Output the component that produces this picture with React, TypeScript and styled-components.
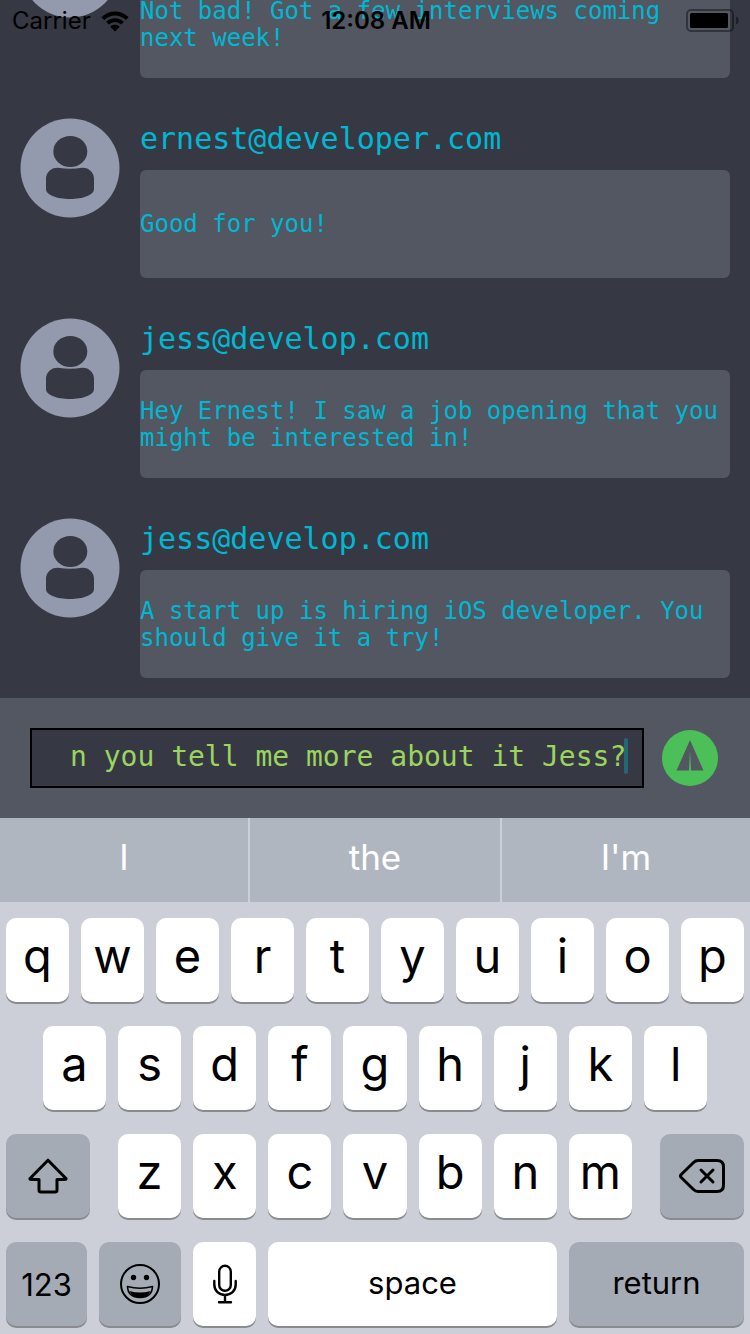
import React from "react";
import styled, { createGlobalStyle } from "styled-components";

const GlobalStyle = createGlobalStyle`
  * { box-sizing: border-box; }
  html, body { margin: 0; padding: 0; background: #363843; }
  button, input { font: inherit; color: inherit; border: 0; padding: 0; margin: 0; outline: 0; background: none; }
`;

const mono = `"DejaVu Sans Mono", "Liberation Mono", monospace`;
const sans = `Inter, "Liberation Sans", sans-serif`;

const Screen = styled.div`
  position: relative;
  display: flex;
  flex-direction: column;
  height: 100vh;
  overflow: hidden;
  background: #363843;
  font-family: ${sans};
`;

const StatusBar = styled.header`
  position: absolute;
  top: 0;
  left: 0;
  right: 0;
  z-index: 1;
  display: grid;
  grid-template-columns: 1fr auto 1fr;
  align-items: center;
  height: 42px;
  padding: 0 10px 0 12px;
  color: #000;
  font-size: 24px;
  line-height: 42px;
`;

const Carrier = styled.div`
  display: flex;
  align-items: center;
  gap: 10px;
`;

const Clock = styled.time`
  font-weight: 600;
`;

const Battery = styled.svg`
  justify-self: end;
`;

const Messages = styled.main`
  flex: 1;
  min-height: 0;
  display: flex;
  flex-direction: column;
  justify-content: flex-end;
  overflow: hidden;
  color: #00b8d1;
  font-family: ${mono};
`;

const MessageRow = styled.article`
  flex: none;
  display: flex;
  gap: 20px;
  height: 200px;
  padding: 20px;
`;

const MessageBody = styled.div`
  flex: 1;
  min-width: 0;
  display: flex;
  flex-direction: column;
`;

const Sender = styled.h2`
  margin: 0;
  height: 52px;
  font-size: 30px;
  font-weight: 400;
  line-height: 42px;
`;

const Bubble = styled.p`
  flex: 1;
  display: flex;
  align-items: center;
  margin: 0;
  padding-top: 1px;
  border-radius: 6px;
  background: #535762;
  font-size: 24px;
  line-height: 27px;
`;

const Composer = styled.form`
  flex: none;
  display: flex;
  align-items: center;
  gap: 18px;
  height: 120px;
  padding: 0 32px 0 30px;
  background: #535762;
`;

const Field = styled.div`
  position: relative;
  flex: 1;
  display: flex;
  height: 60px;
  padding-left: 38px;
  border: 2px solid #000;
  background: #363843;
`;

const MessageInput = styled.input`
  flex: 1;
  min-width: 0;
  padding-bottom: 4px;
  color: #9bd45f;
  font-family: ${mono};
  font-size: 28px;
`;

const Caret = styled.span`
  position: absolute;
  top: 8px;
  right: 14px;
  width: 4px;
  height: 36px;
  border-radius: 2px;
  background: #236877;
`;

const SendButton = styled.button`
  display: flex;
  width: 56px;
  height: 56px;
  border-radius: 50%;
`;

const Keyboard = styled.section`
  flex: none;
  background: #cccfd7;
  color: #000;
`;

const Suggestions = styled.div`
  display: grid;
  grid-template-columns: 248fr 250fr 248fr;
  gap: 2px;
  height: 84px;
`;

const Suggestion = styled.button`
  padding-bottom: 7px;
  background: #b0b6c0;
  color: #fff;
  font-size: 35px;
`;

const Keys = styled.div`
  display: flex;
  flex-direction: column;
  gap: 24px;
  padding: 16px 6px 8px;
`;

const KeyRow = styled.div<{ $inset?: boolean }>`
  display: flex;
  gap: 12px;
  padding: 0 ${(p) => (p.$inset ? "5%" : "0")};
`;

const LetterGroup = styled.div`
  flex: 514 1 0;
  display: flex;
  gap: 12px;
  margin: 0 16px;
`;

const Key = styled.button<{ $grow?: number; $dark?: boolean }>`
  flex: ${(p) => p.$grow ?? 63} 1 0;
  min-width: 0;
  display: flex;
  align-items: center;
  justify-content: center;
  height: 84px;
  border-radius: 10px;
  background: ${(p) => (p.$dark ? "#a4abb5" : "#fff")};
  box-shadow: 0 2px 0 #898b8f;
  font-size: 31px;
`;

const LetterKey = styled(Key)`
  padding-bottom: 10px;
  font-size: 47px;
`;

const WordKey = styled(Key)`
  padding-bottom: 4px;
`;

const Avatar = () => (
  <svg width="100" height="100" viewBox="0 0 100 100" aria-hidden="true">
    <circle cx="50" cy="50" r="49.5" fill="#949aad" />
    <ellipse cx="50.3" cy="33.5" rx="17" ry="15.6" fill="#363843" />
    <path
      d="M38 49.8C46 51 54 51 62 49.8C69 49.5 74 54.500 74 61V71C74 77 63 81 50 81C37 81 26 77 26 71V61C26 54.500 31 49.500 38 49.800Z"
      fill="#363843"
    />
  </svg>
);

const messages = [
  { from: "jess@develop.com", text: "Not bad! Got a few interviews coming next week!" },
  { from: "ernest@developer.com", text: "Good for you!" },
  { from: "jess@develop.com", text: "Hey Ernest! I saw a job opening that you might be interested in!" },
  { from: "jess@develop.com", text: "A start up is hiring iOS developer. You should give it a try!" },
];

const letters = (row: string) =>
  row.split("").map((c) => (
    <LetterKey type="button" key={c}>
      {c}
    </LetterKey>
  ));

export default function App() {
  return (
    <Screen>
      <GlobalStyle />
      <StatusBar>
        <Carrier>
          <span>Carrier</span>
          <svg width="28" height="21" viewBox="0 0 28 21" aria-label="Wi-Fi">
            <path d="M1.800 7.600C8.700 .700 19.300 .700 26.200 7.600" fill="none" stroke="#000" strokeWidth="4" />
            <path d="M6.500 12.200C10.700 8 17.300 8 21.500 12.200" fill="none" stroke="#000" strokeWidth="3.800" />
            <path d="M14 20.500L9.200 15.800C11.900 13.200 16.100 13.200 18.800 15.800Z" />
          </svg>
        </Carrier>
        <Clock>12:08 AM</Clock>
        <Battery width="54" height="24" viewBox="0 0 54 24" aria-label="Battery full">
          <rect x="1" y="1" width="46" height="21" rx="4" fill="none" stroke="#000" strokeOpacity=".4" strokeWidth="2" />
          <rect x="4" y="4" width="38" height="15" rx="1.500" />
          <path d="M50 7.500C53.700 8.500 53.700 14.500 50 15.500Z" fillOpacity=".4" />
        </Battery>
      </StatusBar>

      <Messages>
        {messages.map((m) => (
          <MessageRow key={m.text}>
            <Avatar />
            <MessageBody>
              <Sender>{m.from}</Sender>
              <Bubble>{m.text}</Bubble>
            </MessageBody>
          </MessageRow>
        ))}
      </Messages>

      <Composer onSubmit={(e) => e.preventDefault()}>
        <Field>
          <MessageInput aria-label="Message" defaultValue="n you tell me more about it Jess?" />
          <Caret />
        </Field>
        <SendButton aria-label="Send">
          <svg width="56" height="56" viewBox="0 0 56 56">
            <circle cx="28" cy="28" r="28" fill="#4bc058" />
            <path d="M28 10L41.500 40.500H29L28 21L27 40.500H14.500Z" fill="#535762" />
          </svg>
        </SendButton>
      </Composer>

      <Keyboard aria-label="Keyboard">
        <Suggestions>
          <Suggestion type="button">I</Suggestion>
          <Suggestion type="button">the</Suggestion>
          <Suggestion type="button">I'm</Suggestion>
        </Suggestions>
        <Keys>
          <KeyRow>{letters("qwertyuiop")}</KeyRow>
          <KeyRow $inset>{letters("asdfghjkl")}</KeyRow>
          <KeyRow>
            <Key type="button" $dark $grow={84} aria-label="Shift">
              <svg width="40" height="36" viewBox="0 0 40 36" fill="none" stroke="#000" strokeWidth="3" strokeLinejoin="round">
                <path d="M20 2.200L38 20.500Q38.200 21.500 37 21.500H29V32Q29 34 27 34H13Q11 34 11 32V21.500H3Q1.800 21.500 2 20.500Z" />
              </svg>
            </Key>
            <LetterGroup>{letters("zxcvbnm")}</LetterGroup>
            <Key type="button" $dark $grow={84} aria-label="Delete">
              <svg width="46" height="34" viewBox="0 0 46 34" fill="none" stroke="#000" strokeWidth="3" strokeLinejoin="round" strokeLinecap="round">
                <path d="M19 1.500H38Q44.500 1.500 44.500 8V26Q44.500 32.500 38 32.500H19Q16.500 32.500 14.500 30.500L2 18.200Q1 17 2 15.800L14.500 3.500Q16.500 1.500 19 1.500Z" />
                <path d="M22 11L34 23M34 11L22 23" />
              </svg>
            </Key>
          </KeyRow>
          <KeyRow>
            <Key type="button" $dark $grow={81}>123</Key>
            <Key type="button" $dark $grow={82} aria-label="Emoji">
              <svg width="40" height="40" viewBox="0 0 40 40">
                <circle cx="20" cy="20" r="19" fill="none" stroke="#000" strokeWidth="2" />
                <circle cx="13.500" cy="13.500" r="2.700" />
                <circle cx="26.500" cy="13.500" r="2.700" />
                <path d="M7.500 22.500Q20 26 32.500 22.500Q32 33.500 20 33.500Q8 33.500 7.500 22.500Z" fill="none" stroke="#000" strokeWidth="1.600" strokeLinejoin="round" />
                <path d="M9.500 27Q20 30 30.500 27Q28 33.500 20 33.500Q12 33.500 9.500 27Z" />
              </svg>
            </Key>
            <Key type="button" aria-label="Dictate">
              <svg width="24" height="40" viewBox="0 0 24 40" fill="none" stroke="#000" strokeWidth="2.400" strokeLinecap="round">
                <rect x="6.200" y="1.800" width="11.600" height="25" rx="5.800" />
                <path d="M1.300 17V20.500C1.300 27 6 31 12 31S22.700 27 22.700 20.500V17M12 31V38M6 38.200H18" />
              </svg>
            </Key>
            <WordKey type="button" $grow={289}>space</WordKey>
            <WordKey type="button" $dark $grow={175}>return</WordKey>
          </KeyRow>
        </Keys>
      </Keyboard>
    </Screen>
  );
}
